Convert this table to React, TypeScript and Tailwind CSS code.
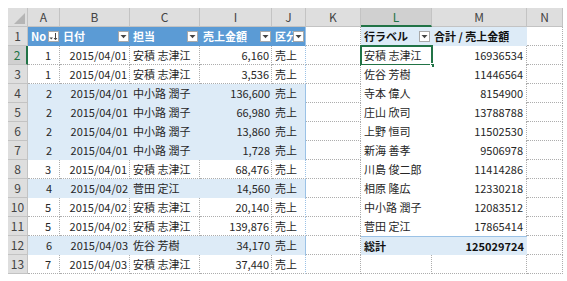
import React from "react";

const font = { fontFamily: '"Noto Sans CJK JP", "Liberation Sans", sans-serif' };

const tableRows = [
  { no: 1, date: "2015/04/01", name: "安積 志津江", amount: "6,160", band: false },
  { no: 1, date: "2015/04/01", name: "安積 志津江", amount: "3,536", band: false },
  { no: 2, date: "2015/04/01", name: "中小路 潤子", amount: "136,600", band: true },
  { no: 2, date: "2015/04/01", name: "中小路 潤子", amount: "66,980", band: true },
  { no: 2, date: "2015/04/01", name: "中小路 潤子", amount: "13,860", band: true },
  { no: 2, date: "2015/04/01", name: "中小路 潤子", amount: "1,728", band: true },
  { no: 3, date: "2015/04/01", name: "安積 志津江", amount: "68,476", band: false },
  { no: 4, date: "2015/04/02", name: "菅田 定江", amount: "14,560", band: true },
  { no: 5, date: "2015/04/02", name: "安積 志津江", amount: "20,140", band: false },
  { no: 5, date: "2015/04/02", name: "安積 志津江", amount: "139,876", band: false },
  { no: 6, date: "2015/04/03", name: "佐谷 芳樹", amount: "34,170", band: true },
  { no: 7, date: "2015/04/03", name: "安積 志津江", amount: "37,440", band: false },
];

const pivotRows = [
  ["安積 志津江", "16936534"],
  ["佐谷 芳樹", "11446564"],
  ["寺本 偉人", "8154900"],
  ["庄山 欣司", "13788788"],
  ["上野 恒司", "11502530"],
  ["新海 善孝", "9506978"],
  ["川島 俊二郎", "11414286"],
  ["相原 隆広", "12330218"],
  ["中小路 潤子", "12083512"],
  ["菅田 定江", "17865414"],
];

const colLetters = ["A", "B", "C", "I", "J", "K", "L", "M", "N"];

const FilterButton = ({ sorted = false }: { sorted?: boolean }) => (
  <div className="w-[11px] h-[11px] shrink-0 bg-white border border-[#a9a9a9] flex items-center justify-center">
    {sorted ? (
      <svg width="9" height="9" viewBox="0 0 9 9">
        <path d="M0.5 5.5 L4 5.5 L2.25 7.5 Z" fill="#444" />
        <path d="M6.5 1 L6.5 7.5 M5 6 L6.5 7.8 L8 6" stroke="#444" strokeWidth="1" fill="none" />
      </svg>
    ) : (
      <svg width="7" height="5" viewBox="0 0 7 5">
        <path d="M0.5 1 L6.5 1 L3.5 4.2 Z" fill="#444" />
      </svg>
    )}
  </div>
);

const dotted = "border-r border-b border-dotted border-[#adadad]";

export default function App() {
  return (
    <div className="w-[567px] h-[281px] bg-white pt-2 pl-2 text-[11px] text-[#262626]" style={font}>
      <div className="grid grid-cols-[20px_32px_70px_70px_72px_34px_55px_71px_95px_36px] grid-rows-[repeat(14,19px)]">
        {/* column header row */}
        <div className="bg-[#dedede] border-r border-b border-[#c3c3c3] flex items-end justify-end p-[2px]">
          <svg width="11" height="11" viewBox="0 0 11 11">
            <path d="M11 0 L11 11 L0 11 Z" fill="#b5b5b5" />
          </svg>
        </div>
        {colLetters.map((c) =>
          c === "L" ? (
            <div
              key={c}
              className="bg-[#d0d0d0] border-r border-[#c3c3c3] border-b-2 border-b-[#217346] flex items-center justify-center text-[12px] text-[#217346]"
            >
              {c}
            </div>
          ) : (
            <div
              key={c}
              className="bg-[#dedede] border-r border-b border-[#c3c3c3] flex items-center justify-center text-[12px] text-[#444]"
            >
              {c}
            </div>
          )
        )}

        {/* row 1 */}
        <div className="bg-[#dedede] border-r border-b border-[#c3c3c3] flex items-center justify-center text-[12px] text-[#444]">
          1
        </div>
        <div className="bg-[#5b9bd5] text-white font-bold flex items-center pl-[3px] pr-[1px] gap-[2px]">
          <span className="flex-1">No</span>
          <FilterButton sorted />
        </div>
        <div className="bg-[#5b9bd5] text-white font-bold flex items-center pl-[3px] pr-[1px]">
          <span className="flex-1">日付</span>
          <FilterButton />
        </div>
        <div className="bg-[#5b9bd5] text-white font-bold flex items-center pl-[3px] pr-[2px]">
          <span className="flex-1">担当</span>
          <FilterButton />
        </div>
        <div className="bg-[#5b9bd5] text-white font-bold flex items-center pl-[3px] pr-[1px]">
          <span className="flex-1">売上金額</span>
          <FilterButton />
        </div>
        <div className="bg-[#5b9bd5] text-white font-bold flex items-center pl-[3px] pr-[1px] border-r border-[#9bc2e6]">
          <span className="flex-1 min-w-0 overflow-hidden whitespace-nowrap">区分</span>
          <FilterButton />
        </div>
        <div className={dotted}></div>
        <div className="bg-[#ddebf7] font-bold flex items-center pl-[3px] pr-[2px] text-[#111]">
          <span className="flex-1">行ラベル</span>
          <FilterButton />
        </div>
        <div className="bg-[#ddebf7] font-bold flex items-center pl-[2px] text-[#111] whitespace-nowrap">
          合計 / 売上金額
        </div>
        <div className={dotted}></div>

        {/* rows 2-13 */}
        {tableRows.map((r, i) => {
          const rowNum = i + 2;
          const cell = r.band ? "bg-[#ddebf7]" : `bg-white ${dotted}`;
          const pivot = pivotRows[i];
          return (
            <React.Fragment key={rowNum}>
              {rowNum === 2 ? (
                <div className="bg-[#d0d0d0] border-b border-[#c3c3c3] border-r-2 border-r-[#217346] flex items-center justify-center text-[12px] text-[#217346]">
                  {rowNum}
                </div>
              ) : (
                <div className="bg-[#dedede] border-r border-b border-[#c3c3c3] flex items-center justify-center text-[12px] text-[#444]">
                  {rowNum}
                </div>
              )}
              <div className={`${cell} flex items-center justify-end pr-[8px]`}>{r.no}</div>
              <div className={`${cell} flex items-center justify-end pr-[2px]`}>{r.date}</div>
              <div className={`${cell} flex items-center pl-[3px] whitespace-nowrap`}>{r.name}</div>
              <div className={`${cell} flex items-center justify-end pr-[2px]`}>{r.amount}</div>
              <div
                className={`${r.band ? "bg-[#ddebf7]" : "bg-white border-b border-dotted border-b-[#adadad]"} border-r border-r-[#9bc2e6] flex items-center pl-[3px] whitespace-nowrap`}
              >
                売上
              </div>
              <div className={dotted}></div>
              {pivot ? (
                <>
                  <div className="relative bg-white flex items-center pl-[3px] whitespace-nowrap">
                    {pivot[0]}
                    {rowNum === 2 && (
                      <div className="absolute -top-[1px] -left-[1px] -right-[1px] -bottom-[1px] border-2 border-[#217346]">
                        <div className="absolute -right-[4px] -bottom-[4px] w-[5px] h-[5px] bg-[#217346] border border-white"></div>
                      </div>
                    )}
                  </div>
                  <div className="bg-white border-r border-dotted border-[#adadad] flex items-center justify-end pr-[3px]">
                    {pivot[1]}
                  </div>
                </>
              ) : rowNum === 12 ? (
                <>
                  <div className="bg-[#ddebf7] border-t border-[#9bc2e6] font-bold flex items-center pl-[3px] text-[#111]">
                    総計
                  </div>
                  <div className="bg-[#ddebf7] border-t border-[#9bc2e6] font-bold flex items-center justify-end pr-[3px] text-[#111]">
                    125029724
                  </div>
                </>
              ) : (
                <>
                  <div className={dotted}></div>
                  <div className={dotted}></div>
                </>
              )}
              <div className={dotted}></div>
            </React.Fragment>
          );
        })}
      </div>
    </div>
  );
}
